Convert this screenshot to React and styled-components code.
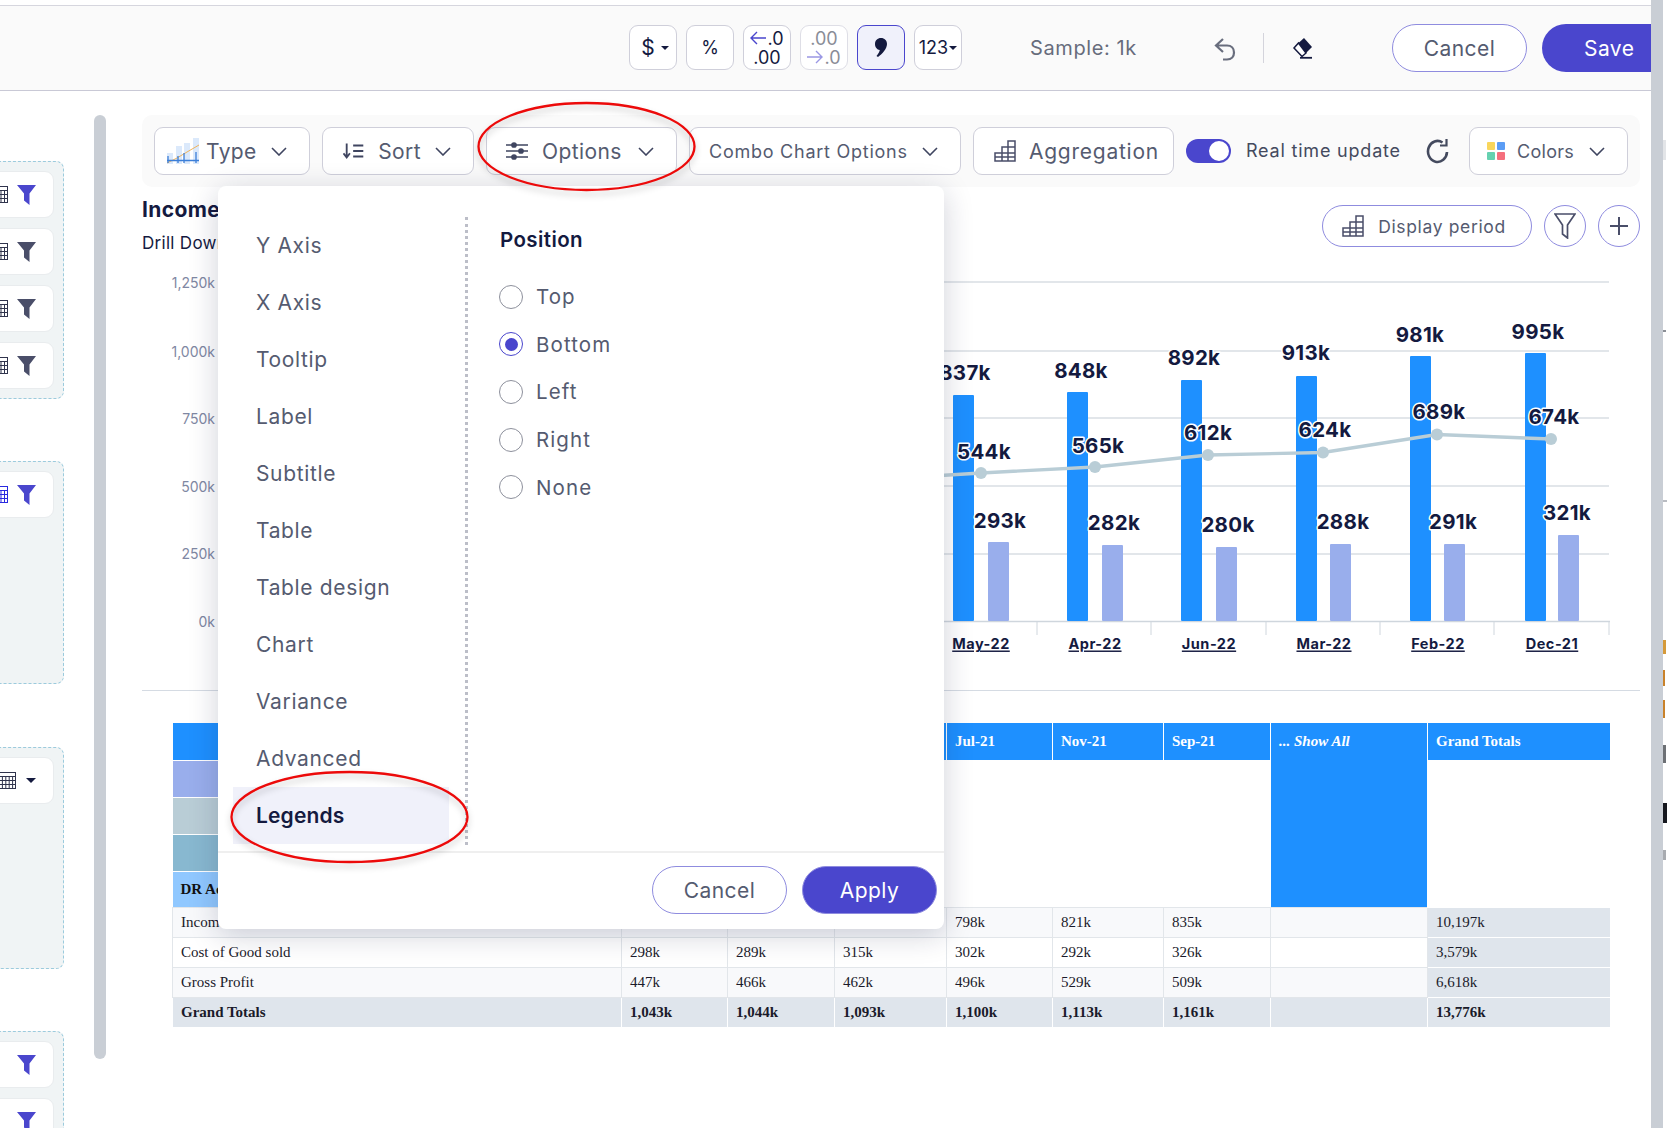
import React from "react";
import styled, { createGlobalStyle } from "styled-components";

const SANS = `Inter, "Noto Sans", "Liberation Sans", sans-serif`;
const INDIGO = "#4a46cd";
const NAVY = "#141a3f";
const SLATE = "#555b70";

const Global = createGlobalStyle`
  html, body { margin: 0; padding: 0; background: #fff; }
  body { font-family: ${SANS}; color: ${SLATE}; }
  * { box-sizing: border-box; }
`;

const Page = styled.div`
  position: relative; width: 1667px; height: 1128px; overflow: hidden; display: flex; background: #fff;
`;
const Main = styled.div`width: 1651px; height: 1128px; display: flex; flex-direction: column;`;
const ScrollStrip = styled.div`width: 12px; height: 1128px; background: #c9ced5;`;
const EdgeStrip = styled.svg`width: 4px; height: 1128px; display: block;`;

const TopBar = styled.header`
  margin-top: 5px; height: 86px; flex: none; display: flex; align-items: center;
  background: #fafafa; border-top: 1px solid #d6d6de; border-bottom: 1px solid #c9c9d6;
`;
const FormatGroup = styled.div`display: flex; gap: 9px; margin-left: 629px; margin-top: -1px; flex: none;`;
const FormatBtn = styled.div`
  width: 48px; height: 45px; border-radius: 9px; background: ${p => p.$active ? "#f0f1fb" : "#fff"};
  border: 1px solid ${p => p.$active ? INDIGO : p.$muted ? "#dedee6" : "#cfcfda"};
  display: flex; flex-direction: ${p => p.$stack ? "column" : "row"}; align-items: center; justify-content: center;
  padding-left: ${p => p.$pl || 0}px;
  font-size: ${p => p.$size || 18}px; line-height: 19px; color: ${p => p.$muted ? "#8a8d97" : NAVY};
`;
const ArrowLine = styled.span`display: flex; align-items: center; gap: 1px; white-space: nowrap;`;
const Caret = styled.span`
  display: inline-block; margin-left: ${p => p.$ml ?? 3}px; width: 0; height: 0; flex: none;
  border-left: ${p => p.$s || 4}px solid transparent; border-right: ${p => p.$s || 4}px solid transparent;
  border-top: ${p => p.$s || 4.5}px solid ${NAVY};
`;
const SampleText = styled.span`
  margin-left: 68px; width: 184px; font-size: 20px; letter-spacing: .6px; color: #676c7c; flex: none;
`;
const IconNudge = styled.span`display: flex; flex: none; margin-top: ${p => p.$t || 0}px;`;
const BarDivider = styled.span`width: 1px; height: 30px; flex: none; background: #d4d4dc; margin: 0 28px 0 27px;`;
const PillBtn = styled.div`
  width: ${p => p.$w}px; height: ${p => p.$h || 48}px; flex: none; border-radius: ${p => p.$h ? p.$h / 2 : 24}px;
  border: 1px solid #8f8cdf; background: ${p => p.$fill ? INDIGO : "#fff"};
  color: ${p => p.$fill ? "#fff" : SLATE}; font-size: ${p => p.$fs || 21}px; letter-spacing: ${p => p.$ls ?? .45}px;
  display: flex; align-items: center; justify-content: center; gap: 14px; margin-left: ${p => p.$ml || 0}px;
  padding-right: ${p => p.$pr || 0}px; padding-top: ${p => p.$pt || 0}px;
`;
const SaveBtn = styled.div`
  width: 109px; height: 48px; margin-left: 15px; flex: none; border-radius: 24px 0 0 24px; background: ${INDIGO};
  color: #fff; font-size: 21px; letter-spacing: .45px; display: flex; align-items: center; padding-left: 42px;
`;

const Body = styled.div`flex: 1; display: flex; min-height: 0;`;
const Sidebar = styled.aside`width: 142px; flex: none; display: flex; height: 100%;`;
const PanelColumn = styled.div`
  width: 64px; flex: none; padding-top: 70px; overflow: hidden; display: flex; flex-direction: column;
`;
const Panel = styled.div`
  width: 84px; margin-left: -20px; height: ${p => p.$h}px; margin-bottom: ${p => p.$mb || 0}px; flex: none;
  background: #f0f4f5; border: 1px dashed #9ccbdd; border-radius: 8px; padding: 9px 9px 0 0;
  display: flex; flex-direction: column; gap: 10px; align-items: flex-end;
`;
const FieldCard = styled.div`
  width: 74px; height: 47px; flex: none; background: #fff; border: 1px solid #e9ecee; border-radius: 9px;
  display: flex; align-items: center; justify-content: flex-end; gap: ${p => p.$gap ?? 9}px; padding-right: 17px;
`;
const Thumb = styled.div`
  width: 12px; height: 944px; margin: 24px 0 0 30px; border-radius: 6px; background: #c9ced5; flex: none;
`;

const Content = styled.main`width: 1498px; flex: none; display: flex; flex-direction: column;`;
const Toolbar = styled.div`
  margin-top: 24px; height: 72px; flex: none; background: #fafafa; border-radius: 10px;
  padding: 12px 0 0 12px; display: flex; align-items: flex-start;
`;
const ToolBtn = styled.div`
  width: ${p => p.$w}px; height: 48px; flex: none; margin-right: ${p => p.$mr ?? 12}px; border-radius: 9px;
  background: #fff; border: 1px solid #cfcfda; display: flex; align-items: center;
  padding: 0 ${p => p.$pr ?? 22}px 0 ${p => p.$pl}px; gap: ${p => p.$gap ?? 14}px;
  font-size: ${p => p.$fs || 21}px; letter-spacing: ${p => p.$ls ?? .4}px; color: ${SLATE}; white-space: nowrap;
`;
const Chev = styled.svg`width: 16px; height: 9px; flex: none; margin-left: auto; display: block;`;
const ToggleTrack = styled.div`
  width: 45px; height: 24px; border-radius: 12px; background: ${INDIGO}; flex: none; margin: 12px 15px 0 0;
  display: flex; align-items: center; justify-content: flex-end; padding-right: 2px;
`;
const ToggleKnob = styled.span`width: 20px; height: 20px; border-radius: 50%; background: #fff;`;
const ToggleText = styled.span`
  width: 179px; flex: none; margin-top: 12px; line-height: 24px; font-size: 18px; letter-spacing: .8px; color: #444a5e;
`;
const RefreshWrap = styled.div`width: 44px; height: 48px; flex: none; display: flex; align-items: center;`;

const HeadRow = styled.div`height: 68px; flex: none; display: flex; justify-content: space-between;`;
const TitleBlock = styled.div`display: flex; flex-direction: column;`;
const Title = styled.div`margin-top: 8px; line-height: 30px; font-size: 21px; letter-spacing: .4px; font-weight: 700; color: ${NAVY}; white-space: nowrap;`;
const Sub = styled.div`margin-top: 6px; line-height: 24px; font-size: 17px; letter-spacing: .3px; color: ${NAVY}; white-space: nowrap;`;
const Actions = styled.div`display: flex; gap: 12px; margin-top: 18px; height: 42px;`;
const CircleBtn = styled.div`
  width: 42px; height: 42px; border-radius: 21px; border: 1px solid #8f8cdf; background: #fff;
  display: flex; align-items: center; justify-content: center;
`;

const ChartSvg = styled.svg`width: 1498px; height: 435px; display: block; flex: none;`;
const ValueLabel = styled.text`
  font-family: ${SANS}; font-weight: 700; font-size: 20.5px; letter-spacing: .3px; fill: ${NAVY}; text-anchor: middle;
  dominant-baseline: central; stroke: #fff; stroke-width: 3px; paint-order: stroke; stroke-linejoin: round;
`;
const AxisY = styled.text`
  font-family: ${SANS}; font-size: 14px; fill: #7f88a3; text-anchor: end; dominant-baseline: central;
`;
const AxisX = styled.text`
  font-family: ${SANS}; font-weight: 700; font-size: 14.5px; letter-spacing: .5px; fill: ${NAVY}; text-anchor: middle;
  dominant-baseline: central; text-decoration: underline;
`;
const Rule = styled.div`height: 1px; background: #d5dbe3; flex: none;`;

const TableWrap = styled.div`margin: 32px 0 0 30px;`;
const DataTable = styled.table`
  width: 1437px; table-layout: fixed; border-collapse: collapse;
  font-family: "Liberation Serif", "Times New Roman", serif; font-size: 15px; color: #1a1a2a;
`;
const Col = styled.col`width: ${p => p.$w}px;`;
const HeadCell = styled.th`
  height: 37px; padding: 0 8px; text-align: left; font-weight: 700; color: #fff; background: #1e90ff;
  border-right: 1px solid #fff; font-style: ${p => p.$italic ? "italic" : "normal"}; vertical-align: ${p => p.$top ? "top" : "middle"};
  line-height: ${p => p.$top ? "37px" : "normal"}; &:last-child { border-right: 0; }
`;
const BandCell = styled.td`
  height: ${p => p.$h || 37}px; padding: 0 8px; background: ${p => p.$bg}; border-top: 1px solid #fff; font-weight: 700; color: #111;
  white-space: nowrap; overflow: hidden;
`;
const Blank = styled.td`background: #fff; padding: 0;`;
const Cell = styled.td`
  height: 30px; padding: 0 8px; font-weight: ${p => p.$total ? 700 : 400};
  background: ${p => p.$total || p.$grand ? "#dfe5ec" : p.$odd ? "#f8f9fb" : "#fff"};
  border: 1px solid ${p => p.$total || p.$grand ? "#fff" : "#e2e6ea"};
  border-width: ${p => p.$total || p.$grand ? "1px 0 1px 1px" : "1px"};
  white-space: nowrap;
`;

const Popup = styled.div`
  position: absolute; left: 218px; top: 186px; width: 726px; height: 743px; background: #fff; border-radius: 8px;
  box-shadow: 0 6px 30px rgba(20, 26, 63, .2); display: flex; flex-direction: column;
`;
const PopupBody = styled.div`height: 665px; flex: none; display: flex; padding-top: 31px;`;
const Menu = styled.nav`
  width: 250px; flex: none; padding: 0 16px 0 15px; height: 628px;
  border-right: 3px dotted #bcbec8; display: flex; flex-direction: column;
`;
const MenuItem = styled.div`
  height: 57px; flex: none; padding-left: 23px; display: flex; align-items: center; font-size: 21px;
  letter-spacing: ${p => p.$active ? .15 : .65}px;
  background: ${p => p.$active ? "#f0f1fa" : "transparent"}; color: ${p => p.$active ? NAVY : SLATE};
  font-weight: ${p => p.$active ? 600 : 400};
`;
const Settings = styled.section`padding: 8px 0 0 32px; display: flex; flex-direction: column;`;
const SettingsTitle = styled.div`line-height: 30px; font-size: 20.5px; letter-spacing: .4px; font-weight: 600; color: ${NAVY}; margin-bottom: 18px;`;
const RadioRow = styled.div`
  height: 47.6px; margin-left: -1px; display: flex; align-items: center; gap: 13px; font-size: 20.5px; letter-spacing: 1.1px; color: ${SLATE};
`;
const RadioDot = styled.span`
  width: 24px; height: 24px; border-radius: 50%; flex: none; background: #fff;
  border: 1.5px solid ${p => p.$on ? INDIGO : "#8d909c"}; display: flex; align-items: center; justify-content: center;
  &::after { content: ""; width: 13px; height: 13px; border-radius: 50%; background: ${p => p.$on ? INDIGO : "transparent"}; }
`;
const PopupFoot = styled.footer`
  flex: 1; border-top: 2px solid #efefef; display: flex; justify-content: flex-end; gap: 15px; padding: 13px 7px 0 0;
`;
const Ring = styled.svg`
  position: absolute; left: ${p => p.$x}px; top: ${p => p.$y}px; width: ${p => p.$w}px; height: ${p => p.$h}px;
  overflow: visible; filter: drop-shadow(0 4px 3px rgba(0,0,0,.22)); pointer-events: none;
`;

const Chevron = () => (
  <Chev viewBox="0 0 16 9"><polyline points="1,1 8,8 15,1" fill="none" stroke="#3f4560" strokeWidth="1.6" /></Chev>
);
const Funnel = ({ color }) => (
  <svg width="19" height="20" viewBox="0 0 19 20"><path d="M0 0H19L12.5 8.5V20L7 15.5V8.5Z" fill={color} /></svg>
);
const GridIcon = ({ color = "#30344d", w = 14, cols = 3 }) => (
  <svg width={w} height="17" viewBox={`0 0 ${w} 17`}>
    <rect x=".5" y=".5" width={w - 1} height="16" fill="#fff" stroke={color} />
    <path d="M0 4.5H14M0 8.5H14M0 12.5H14" stroke={color} transform={`scale(${w / 14} 1)`} />
    {Array.from({ length: cols }, (_, i) => (
      <path key={i} d={`M${((i + 1) * w) / (cols + 1)} 4V17`} stroke={color} />
    ))}
  </svg>
);
const StairIcon = ({ s = 22 }) => (
  <svg width={s} height={s} viewBox="0 0 22 22" fill="none" stroke="#4a4e69" strokeWidth="1.5">
    <path d="M1 21V13H8V7H14V1H21V21ZM1 17H21M8 13V21M14 7V21M8 13H21M14 7H21" />
  </svg>
);
const TypeIcon = () => (
  <svg width="33" height="26" viewBox="0 0 33 26">
    <rect x="0" y="15" width="6" height="11" fill="#dbe9fb" />
    <rect x="9" y="8" width="6" height="18" fill="#dbe9fb" />
    <rect x="17" y="5" width="6" height="21" fill="#dbe9fb" />
    <rect x="26" y="0" width="6" height="26" fill="#dbe9fb" />
    <path d="M0 25L10 20L20 14L32 7" fill="none" stroke="#f0b35a" strokeWidth="1" />
    <path d="M1 18V25M11 18V25M17 15V25M29 14V25M0 22.5H32" fill="none" stroke="#3c7fd8" strokeWidth="1.3" />
  </svg>
);
const SortIcon = () => (
  <svg width="23" height="16" viewBox="0 0 23 16" fill="none" stroke="#3f4560" strokeWidth="2">
    <path d="M4 0V14M.5 10.5L4 15L7.500 10.500M11 2H22M11 8H22M11 14H22" />
  </svg>
);
const SlidersIcon = () => (
  <svg width="22" height="18" viewBox="0 0 22 18" fill="#3f4560" stroke="#3f4560" strokeWidth="1.7">
    <path d="M0 3H22M0 9H22M0 15H22" fill="none" />
    <circle cx="8" cy="3" r="2" /><circle cx="15" cy="9" r="2" /><circle cx="8" cy="15" r="2" />
  </svg>
);
const SwatchIcon = () => (
  <svg width="18" height="18" viewBox="0 0 18 18">
    <rect x="0" y="0" width="8" height="8" rx="1" fill="#f9d65c" />
    <rect x="10" y="0" width="8" height="8" rx="1" fill="#5b9df5" />
    <rect x="0" y="10" width="8" height="8" rx="1" fill="#66d1b0" />
    <rect x="10" y="10" width="8" height="8" rx="1" fill="#f56f7d" />
  </svg>
);
const RefreshIcon = () => (
  <svg width="26" height="26" viewBox="0 0 26 26" fill="none" stroke="#444a5e" strokeWidth="2.6">
    <path d="M22 14A9.500 10.500 0 1 1 17.500 4.500" />
    <path d="M21.500 1V7.500H15" strokeWidth="2.200" />
  </svg>
);
const UndoIcon = () => (
  <svg width="22" height="23" viewBox="0 0 22 23" fill="none" stroke="#686d7d" strokeWidth="2.200">
    <path d="M9 1L2 7.500L9 14M2 7.500H13C17.500 7.500 20 10.500 20 14.500C20 18.500 17.500 21.500 13 21.500H9" />
  </svg>
);
const EraserIcon = () => (
  <svg width="22" height="21" viewBox="0 0 22 21">
    <path d="M12 0L20 9L14 15L6.500 5Z" fill={NAVY} />
    <path d="M6.500 5L14 15L10 18.500L2 10Z" fill="#fff" stroke={NAVY} strokeWidth="1.5" />
    <path d="M8 19.800H20" stroke={NAVY} strokeWidth="1.800" />
  </svg>
);
const CommaIcon = () => (
  <svg width="12" height="19" viewBox="0 0 12 19">
    <path d="M6 0C9.500 0 12 2.500 12 6C12 11 7 16 3 19L1.500 18C3.500 15.500 4.500 13.500 4.800 12C2 11.700 0 9.300 0 6C0 2.500 2.500 0 6 0Z" fill={NAVY} />
  </svg>
);
const LongArrow = ({ dir, color }) => (
  <svg width="16" height="14" viewBox="0 0 16 14" fill="none" stroke={color} strokeWidth="1.400">
    {dir === "left" ? <path d="M7 1L1 7L7 13M1 7H16" /> : <path d="M9 1L15 7L9 13M15 7H0" />}
  </svg>
);

const gridY = [282, 351, 418, 486, 554];
const yLabels = [["1,250k", 282], ["1,000k", 351], ["750k", 418], ["500k", 486], ["250k", 553], ["0k", 621]];
const months = [
  { m: "May-22", cx: 981, lx: 981, b: 953, bt: 395, l: 988, lt: 542, ly: 473, v1: ["837k", 965, 372], v2: ["544k", 984, 451], v3: ["293k", 1000, 520] },
  { m: "Apr-22", cx: 1095, lx: 1095, b: 1067, bt: 392, l: 1102, lt: 545, ly: 467, v1: ["848k", 1081, 370], v2: ["565k", 1098, 445], v3: ["282k", 1114, 522] },
  { m: "Jun-22", cx: 1209, lx: 1208, b: 1181, bt: 380, l: 1216, lt: 547, ly: 455, v1: ["892k", 1194, 357], v2: ["612k", 1208, 432], v3: ["280k", 1228, 524] },
  { m: "Mar-22", cx: 1324, lx: 1323, b: 1296, bt: 376, l: 1330, lt: 544, ly: 452.5, v1: ["913k", 1306, 352], v2: ["624k", 1325, 429], v3: ["288k", 1343, 521] },
  { m: "Feb-22", cx: 1438, lx: 1437, b: 1410, bt: 356, l: 1444, lt: 544, ly: 434.5, v1: ["981k", 1420, 334], v2: ["689k", 1439, 411], v3: ["291k", 1453, 521] },
  { m: "Dec-21", cx: 1552, lx: 1551, b: 1525, bt: 353, l: 1558, lt: 535, ly: 439, v1: ["995k", 1538, 331], v2: ["674k", 1554, 416], v3: ["321k", 1567, 512] },
];
const ticks = [1037, 1151, 1266, 1380, 1494, 1609];

const Chart = () => (
  <ChartSvg viewBox="142 255 1498 435">
    {gridY.map(y => <line key={y} x1="222" x2="1609" y1={y} y2={y} stroke="#d9dee3" strokeWidth="1.300" />)}
    <line x1="222" x2="1610" y1="621.500" y2="621.500" stroke="#cfd6dd" strokeWidth="1.500" />
    {ticks.map(x => <line key={x} x1={x} x2={x} y1="621" y2="635" stroke="#cfd6dd" />)}
    {yLabels.map(([t, y]) => <AxisY key={t} x="215" y={y}>{t}</AxisY>)}
    {months.map(d => (
      <g key={d.m}>
        <rect x={d.b} y={d.bt} width="21" height={621 - d.bt} rx="1" fill="#1e90ff" />
        <rect x={d.l} y={d.lt} width="21" height={621 - d.lt} rx="1" fill="#99aeec" />
      </g>
    ))}
    <polyline points={`900,478 ${months.map(d => `${d.lx},${d.ly}`).join(" ")}`} fill="none" stroke="#b9cdd6" strokeWidth="3.400" />
    {months.map(d => <circle key={d.m} cx={d.lx} cy={d.ly} r="6" fill="#b9cdd6" />)}
    {months.flatMap(d => [d.v1, d.v2, d.v3]).map(([t, x, y]) => <ValueLabel key={t} x={x} y={y}>{t}</ValueLabel>)}
    {months.map(d => <AxisX key={d.m} x={d.cx} y="643">{d.m}</AxisX>)}
  </ChartSvg>
);

const rows = [
  ["Income", "745k", "755k", "777k", "798k", "821k", "835k", "", "10,197k"],
  ["Cost of Good sold", "298k", "289k", "315k", "302k", "292k", "326k", "", "3,579k"],
  ["Gross Profit", "447k", "466k", "462k", "496k", "529k", "509k", "", "6,618k"],
  ["Grand Totals", "1,043k", "1,044k", "1,093k", "1,100k", "1,113k", "1,161k", "", "13,776k"],
];
const colWidths = [449, 106, 107, 112, 106, 111, 107, 157, 182];

const Table = () => (
  <DataTable>
    <colgroup>{colWidths.map((w, i) => <Col key={i} $w={w} />)}</colgroup>
    <thead>
      <tr>
        <HeadCell />
        {["Jan-22", "Oct-21", "Aug-21", "Jul-21", "Nov-21", "Sep-21"].map(h => <HeadCell key={h}>{h}</HeadCell>)}
        <HeadCell rowSpan={5} $italic $top>... Show All</HeadCell>
        <HeadCell>Grand Totals</HeadCell>
      </tr>
      <tr>
        <BandCell $bg="#99aeec" />
        <Blank colSpan={6} rowSpan={4} />
        <Blank rowSpan={4} />
      </tr>
      <tr><BandCell $bg="#b9cdd6" /></tr>
      <tr><BandCell $bg="#88b8d0" /></tr>
      <tr><BandCell $bg="#90c8ff" $h={36}>DR Account</BandCell></tr>
    </thead>
    <tbody>
      {rows.map((r, ri) => (
        <tr key={r[0]}>
          {r.map((c, ci) => (
            <Cell key={ci} $odd={ri % 2 === 0} $total={ri === 3} $grand={ci === 8}>{c}</Cell>
          ))}
        </tr>
      ))}
    </tbody>
  </DataTable>
);

const menu = ["Y Axis", "X Axis", "Tooltip", "Label", "Subtitle", "Table", "Table design", "Chart", "Variance", "Advanced", "Legends"];
const positions = ["Top", "Bottom", "Left", "Right", "None"];

export default function App() {
  return (
    <Page>
      <Global />
      <Main>
        <TopBar>
          <FormatGroup>
            <FormatBtn $size={21} $pl={4}>$<Caret $ml={6} /></FormatBtn>
            <FormatBtn>%</FormatBtn>
            <FormatBtn $stack><ArrowLine><LongArrow dir="left" color={INDIGO} />.0</ArrowLine><span>.00</span></FormatBtn>
            <FormatBtn $stack $muted><span>.00</span><ArrowLine><LongArrow dir="right" color="#9a97e4" />.0</ArrowLine></FormatBtn>
            <FormatBtn $active><CommaIcon /></FormatBtn>
            <FormatBtn $size={18}>123<Caret $ml={1} /></FormatBtn>
          </FormatGroup>
          <SampleText>Sample: 1k</SampleText>
          <IconNudge $t={2}><UndoIcon /></IconNudge>
          <BarDivider />
          <IconNudge $t={1}><EraserIcon /></IconNudge>
          <PillBtn $w={135} $ml={78}>Cancel</PillBtn>
          <SaveBtn>Save</SaveBtn>
        </TopBar>
        <Body>
          <Sidebar>
            <PanelColumn>
              <Panel $h={238} $mb={62}>
                <FieldCard><GridIcon /><Funnel color={INDIGO} /></FieldCard>
                <FieldCard><GridIcon /><Funnel color="#4a4e69" /></FieldCard>
                <FieldCard><GridIcon /><Funnel color="#4a4e69" /></FieldCard>
                <FieldCard><GridIcon /><Funnel color="#4a4e69" /></FieldCard>
              </Panel>
              <Panel $h={223} $mb={63}>
                <FieldCard><GridIcon color="#2a2ae0" /><Funnel color={INDIGO} /></FieldCard>
              </Panel>
              <Panel $h={222} $mb={62}>
                <FieldCard $gap={10}><GridIcon w={17} cols={4} /><Caret $ml={0} $s={5} /></FieldCard>
              </Panel>
              <Panel $h={140}>
                <FieldCard><Funnel color={INDIGO} /></FieldCard>
                <FieldCard><Funnel color={INDIGO} /></FieldCard>
              </Panel>
            </PanelColumn>
            <Thumb />
          </Sidebar>
          <Content>
            <Toolbar>
              <ToolBtn $w={156} $pl={12} $gap={6}><TypeIcon />Type<Chevron /></ToolBtn>
              <ToolBtn $w={152} $pl={20}><SortIcon />Sort<Chevron /></ToolBtn>
              <ToolBtn $w={191} $pl={19} $mr={12}><SlidersIcon />Options<Chevron /></ToolBtn>
              <ToolBtn $w={272} $pl={19} $fs={18} $ls={.75}>Combo Chart Options<Chevron /></ToolBtn>
              <ToolBtn $w={201} $pl={20} $pr={8} $gap={13} $ls={.75} $mr={12}><StairIcon />Aggregation</ToolBtn>
              <ToggleTrack><ToggleKnob /></ToggleTrack>
              <ToggleText>Real time update</ToggleText>
              <RefreshWrap><RefreshIcon /></RefreshWrap>
              <ToolBtn $w={159} $pl={17} $gap={12} $fs={18} $ls={.3} $mr={0}><SwatchIcon />Colors<Chevron /></ToolBtn>
            </Toolbar>
            <HeadRow>
              <TitleBlock>
                <Title>Income Statement</Title>
                <Sub>Drill Down</Sub>
              </TitleBlock>
              <Actions>
                <PillBtn $w={210} $h={42} $fs={17.5} $ls={.65} $pr={6}><StairIcon />Display period</PillBtn>
                <CircleBtn>
                  <svg width="22" height="26" viewBox="0 0 22 26" fill="none" stroke="#4a4e69" strokeWidth="1.700">
                    <path d="M1 1H21L13.500 12V25L8.500 21V12Z" />
                  </svg>
                </CircleBtn>
                <CircleBtn>
                  <svg width="18" height="18" viewBox="0 0 18 18" stroke="#4a4e69" strokeWidth="2"><path d="M9 0V18M0 9H18" /></svg>
                </CircleBtn>
              </Actions>
            </HeadRow>
            <Chart />
            <Rule />
            <TableWrap><Table /></TableWrap>
          </Content>
        </Body>
      </Main>
      <ScrollStrip />
      <EdgeStrip viewBox="0 0 4 1128">
        <rect y="140" width="3" height="20" fill="#e3e5e8" />
        <rect y="330" width="3" height="2" fill="#8b8f96" />
        <rect y="500" width="4" height="2" fill="#b9bcc2" />
        <rect y="640" width="3" height="14" fill="#d59a3a" />
        <rect y="670" width="2" height="16" fill="#c9822a" />
        <rect y="700" width="2" height="18" fill="#c9822a" />
        <rect y="745" width="3" height="18" fill="#6d7075" />
        <rect y="803" width="4" height="20" fill="#16181f" />
        <rect y="850" width="3" height="10" fill="#a8abb0" />
      </EdgeStrip>

      <Popup>
        <PopupBody>
          <Menu>
            {menu.map(m => <MenuItem key={m} $active={m === "Legends"}>{m}</MenuItem>)}
          </Menu>
          <Settings>
            <SettingsTitle>Position</SettingsTitle>
            {positions.map(p => (
              <RadioRow key={p}><RadioDot $on={p === "Bottom"} />{p}</RadioRow>
            ))}
          </Settings>
        </PopupBody>
        <PopupFoot>
          <PillBtn $w={135} $pt={1}>Cancel</PillBtn>
          <PillBtn $w={135} $fill $pt={1}>Apply</PillBtn>
        </PopupFoot>
      </Popup>

      <Ring $x={478} $y={102} $w={217} $h={89} viewBox="0 0 217 89">
        <ellipse cx="108.500" cy="44.500" rx="108" ry="43.500" fill="none" stroke="#ec0a0a" strokeWidth="2.300" />
      </Ring>
      <Ring $x={231} $y={771} $w={237} $h={92} viewBox="0 0 237 92">
        <ellipse cx="118.500" cy="46" rx="118" ry="45" fill="none" stroke="#ec0a0a" strokeWidth="2.300" />
      </Ring>
    </Page>
  );
}
